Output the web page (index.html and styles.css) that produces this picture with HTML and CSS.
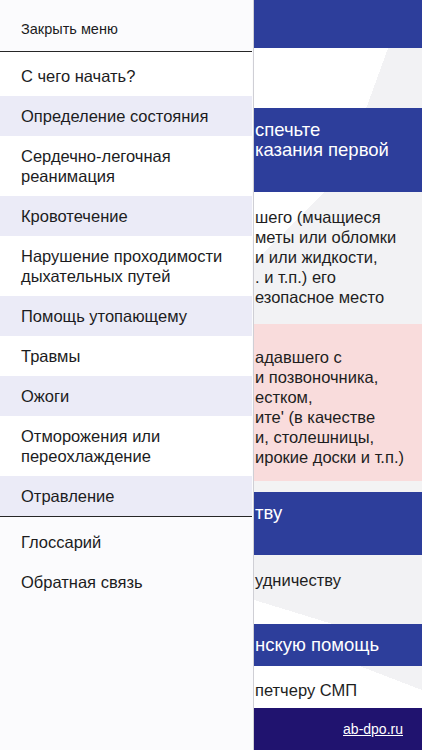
FILE: index.html
```html
<!DOCTYPE html>
<html lang="ru">
<head>
<meta charset="utf-8">
<title>Первая помощь</title>
<link rel="stylesheet" href="styles.css">
</head>
<body>
<nav class="menu">
  <div class="menu-head">Закрыть меню</div>
  <ul class="menu-list">
    <li class="menu-item">С чего начать?</li>
    <li class="menu-item alt">Определение состояния</li>
    <li class="menu-item">Сердечно-легочная<br>реанимация</li>
    <li class="menu-item alt">Кровотечение</li>
    <li class="menu-item">Нарушение проходимости<br>дыхательных путей</li>
    <li class="menu-item alt">Помощь утопающему</li>
    <li class="menu-item">Травмы</li>
    <li class="menu-item alt">Ожоги</li>
    <li class="menu-item">Отморожения или<br>переохлаждение</li>
    <li class="menu-item alt">Отравление</li>
  </ul>
  <ul class="menu-extra">
    <li class="menu-item">Глоссарий</li>
    <li class="menu-item">Обратная связь</li>
  </ul>
</nav>

<main class="page">
  <header class="topbar"></header>
  <section class="intro"></section>
  <section class="block block-blue block-a">
    <p class="text">спечьте<br>казания первой</p>
  </section>
  <section class="block block-t">
    <p class="text">шего (мчащиеся<br>меты или обломки<br>и или жидкости,<br>. и т.п.) его<br>езопасное место</p>
  </section>
  <section class="block block-pink">
    <p class="text">адавшего с<br>и позвоночника,<br>естком,<br>ите' (в качестве<br>и, столешницы,<br>ирокие доски и т.п.)</p>
  </section>
  <div class="gap"></div>
  <section class="block block-blue block-b">
    <p class="text">тву</p>
  </section>
  <section class="block block-c">
    <p class="text">удничеству</p>
  </section>
  <section class="block block-blue block-d">
    <p class="text">нскую помощь</p>
  </section>
  <section class="block block-e">
    <p class="text">петчеру СМП</p>
  </section>
  <footer class="footer"><a class="footer-link" href="#">ab-dpo.ru</a></footer>
</main>
</body>
</html>
```
FILE: styles.css
```css
* { box-sizing: border-box; }

html, body {
  margin: 0;
  padding: 0;
}

body {
  width: 422px;
  height: 750px;
  overflow: hidden;
  font-family: "Liberation Sans", Arial, sans-serif;
  background: #f3f3f4;
  display: flex;
}

/* Slide-out menu */
.menu {
  width: 254px;
  height: 750px;
  flex: none;
  background: #fbfbfd;
  border-right: 1px solid #cfcfd5;
  display: flex;
  flex-direction: column;
  color: #1c1c1e;
}

.menu-head {
  height: 52px;
  flex: none;
  padding: 20px 21px 0;
  font-size: 14.5px;
  line-height: 18px;
  border-bottom: 1px solid #262626;
  margin-right: 1px;
}

.menu-list,
.menu-extra {
  list-style: none;
  margin: 0;
  padding: 0;
}

.menu-list {
  padding-top: 4px;
  background: #ffffff;
  border-bottom: 1px solid #262626;
  margin-right: 1px;
}

.menu-extra {
  padding-top: 5px;
}

.menu-item {
  padding: 10px 21px;
  font-size: 16.5px;
  line-height: 20px;
}

.menu-item.alt {
  background: #ebebf7;
}

/* Page behind the menu (visible part) */
.page {
  flex: 1;
  min-width: 0;
  height: 750px;
  display: flex;
  flex-direction: column;
  overflow: hidden;
}

.topbar {
  height: 48px;
  flex: none;
  background: #2d3e9b;
}

.intro {
  height: 60px;
  flex: none;
  background: linear-gradient(110deg, #ffffff 126px, #f2f2f4 126px);
}

.block {
  flex: none;
  padding-left: 1px;
}

.text {
  margin: 0;
  white-space: nowrap;
  line-height: 20px;
  font-size: 16.5px;
  color: #1e1e1e;
}

.block-blue {
  background: #2d3e9b;
}

.block-blue .text {
  color: #ffffff;
  font-size: 18.5px;
}

.block-a {
  height: 84px;
  padding-top: 12px;
}

.block-t {
  height: 132px;
  padding-top: 15px;
  background: linear-gradient(135deg, #ffffff 50px, #f2f2f4 50px);
}

.block-pink {
  height: 157px;
  padding-top: 23px;
  background: #f9dcdc;
}

.gap {
  height: 11px;
  flex: none;
  background: #f3f3f4;
}

.block-b {
  height: 63px;
  padding-top: 11px;
}

.block-c {
  height: 69px;
  padding-top: 15px;
  background: linear-gradient(17deg, #ffffff 23px, #f2f2f4 23px);
}

.block-d {
  height: 42px;
  padding-top: 11px;
}

.block-e {
  height: 42px;
  padding-top: 14px;
  background: linear-gradient(21deg, #ffffff 77px, #f2f2f4 77px);
}

.footer {
  height: 42px;
  flex: none;
  background: #20136f;
  display: flex;
  justify-content: flex-end;
  align-items: center;
  padding-right: 19px;
}

.footer-link {
  color: #ffffff;
  font-size: 14px;
  text-decoration: underline;
}
```
